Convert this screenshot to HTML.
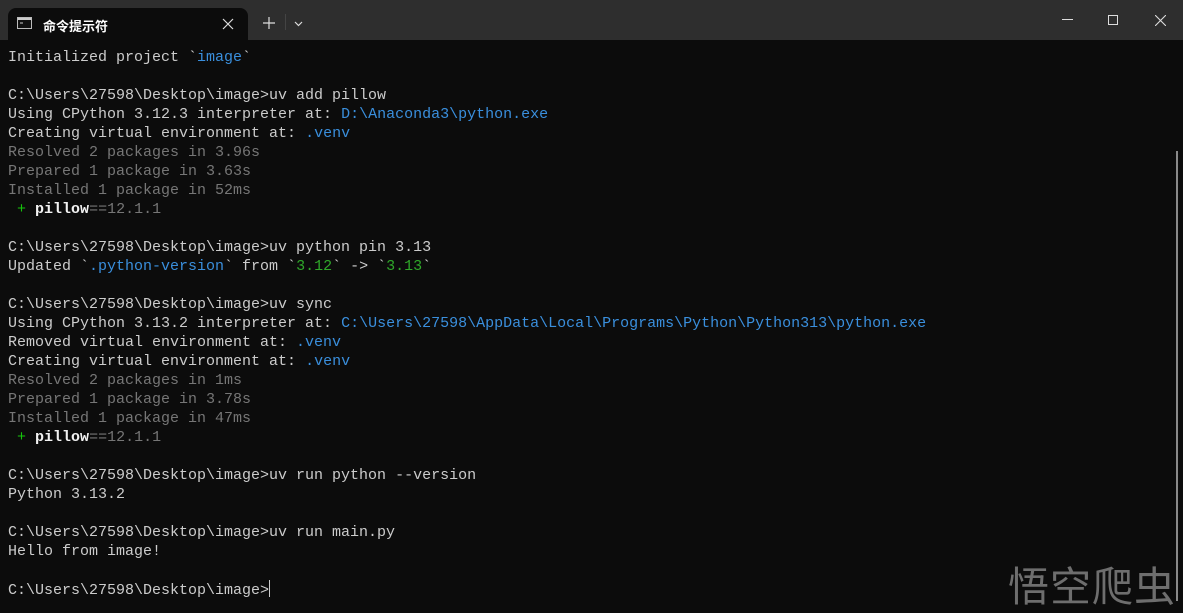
<!DOCTYPE html>
<html><head><meta charset="utf-8"><style>
*{margin:0;padding:0;box-sizing:border-box}
body{width:1183px;height:607px;background:#0c0c0c;overflow:hidden;position:relative;font-family:"Liberation Sans","Noto Sans CJK SC",sans-serif}
.tb{position:absolute;left:0;top:0;width:1183px;height:40px;background:#2e2e2e}
.tab{position:absolute;left:8px;top:8px;width:240px;height:32px;background:#0c0c0c;border-radius:8px 8px 0 0}
.tab .t{position:absolute;left:35px;top:8px;font-size:13px;color:#fff;font-weight:bold}
.term{position:absolute;left:8px;top:48px;font-family:"Liberation Mono",monospace;font-size:15px;line-height:19px;color:#cccccc;white-space:pre}
.b{color:#3a8fdd}.g{color:#767676}.gr{color:#16c60c}.w{color:#f2f2f2;font-weight:bold}.gn{color:#2fa82a}
.wm{position:absolute;left:1008px;top:560px;font-size:41px;color:#6e6e6e;font-family:"Noto Sans CJK SC",sans-serif;line-height:46px;letter-spacing:1px}
</style></head><body>
<div class="tb">
<div class="tab">
<svg style="position:absolute;left:9px;top:9px" width="15" height="12"><rect x="0.5" y="0.5" width="14" height="11" fill="#111" stroke="#bbb"/><rect x="1" y="1" width="13" height="2" fill="#ccc"/><path d="M3 6h3" stroke="#ccc"/></svg>
<div class="t">命令提示符</div>
<svg style="position:absolute;left:214px;top:10px" width="12" height="12"><path d="M1 1L11 11M11 1L1 11" stroke="#ddd" stroke-width="1.2"/></svg>
</div>
<svg style="position:absolute;left:263px;top:17px" width="12" height="12"><path d="M6 0V12M0 6H12" stroke="#ddd" stroke-width="1.2"/></svg>
<div style="position:absolute;left:285px;top:14px;width:1px;height:16px;background:#444"></div>
<svg style="position:absolute;left:294px;top:21px" width="9" height="6"><path d="M1 1L4.5 4.5L8 1" stroke="#ddd" fill="none" stroke-width="1.2"/></svg>
<div style="position:absolute;left:1062px;top:19px;width:11px;height:1px;background:#ddd"></div>
<div style="position:absolute;left:1108px;top:15px;width:10px;height:10px;border:1px solid #ddd"></div>
<svg style="position:absolute;left:1155px;top:15px" width="11" height="11"><path d="M0 0L11 11M11 0L0 11" stroke="#ddd" stroke-width="1.1"/></svg>
</div>
<div class="term">Initialized project `<span class="b">image</span>`

C:\Users\27598\Desktop\image>uv add pillow
Using CPython 3.12.3 interpreter at: <span class="b">D:\Anaconda3\python.exe</span>
Creating virtual environment at: <span class="b">.venv</span>
<span class="g">Resolved 2 packages in 3.96s</span>
<span class="g">Prepared 1 package in 3.63s</span>
<span class="g">Installed 1 package in 52ms</span>
 <span class="gr">+</span> <span class="w">pillow</span><span class="g">==12.1.1</span>

C:\Users\27598\Desktop\image>uv python pin 3.13
Updated `<span class="b">.python-version</span>` from `<span class="gn">3.12</span>` -&gt; `<span class="gn">3.13</span>`

C:\Users\27598\Desktop\image>uv sync
Using CPython 3.13.2 interpreter at: <span class="b">C:\Users\27598\AppData\Local\Programs\Python\Python313\python.exe</span>
Removed virtual environment at: <span class="b">.venv</span>
Creating virtual environment at: <span class="b">.venv</span>
<span class="g">Resolved 2 packages in 1ms</span>
<span class="g">Prepared 1 package in 3.78s</span>
<span class="g">Installed 1 package in 47ms</span>
 <span class="gr">+</span> <span class="w">pillow</span><span class="g">==12.1.1</span>

C:\Users\27598\Desktop\image>uv run python --version
Python 3.13.2

C:\Users\27598\Desktop\image>uv run main.py
Hello from image!

C:\Users\27598\Desktop\image&gt;<span style="display:inline-block;width:1px;height:17px;background:#ccc;vertical-align:-3px"></span></div>
<div style="position:absolute;left:1176px;top:151px;width:2px;height:450px;background:#8a8a8a"></div>
<div class="wm">悟空爬虫</div>
</body></html>
